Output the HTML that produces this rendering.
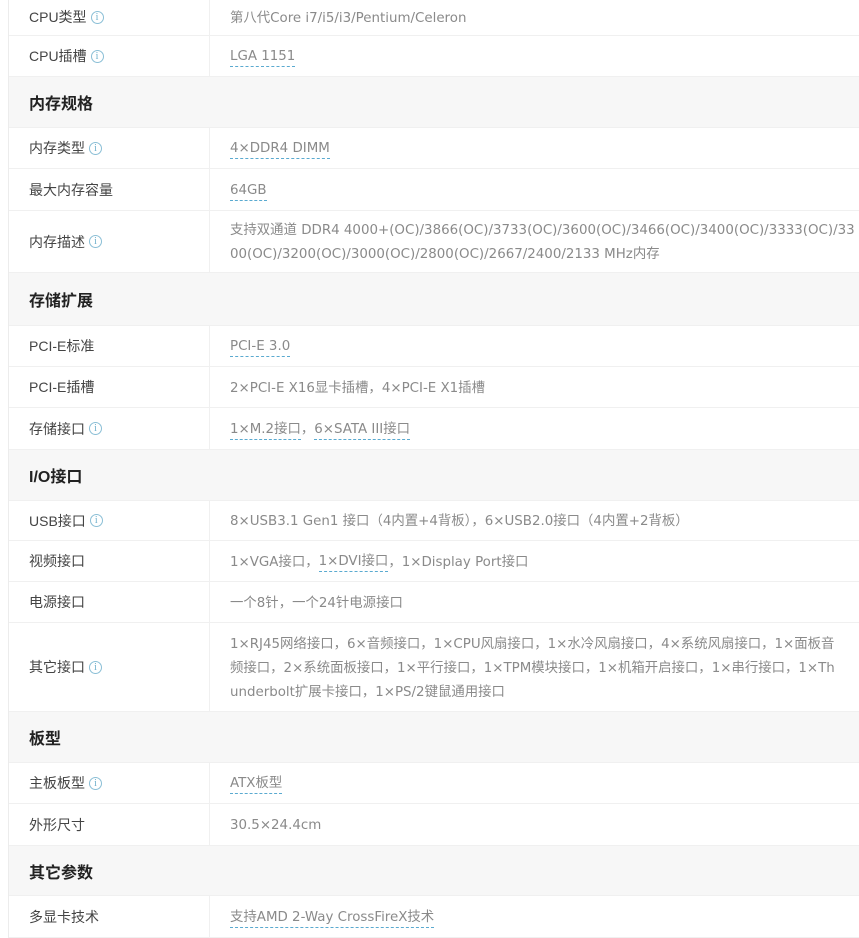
<!DOCTYPE html>
<html><head><meta charset="utf-8"><style>
*{margin:0;padding:0;box-sizing:border-box}
body{width:859px;height:931px;overflow:hidden;background:#fff;font-family:"Liberation Sans","Noto Sans CJK SC",sans-serif;font-size:14px;position:relative}
.wrap{position:absolute;left:8px;top:-1px;width:900px;border-left:1px solid #ececec}
.r{display:flex;border-bottom:1px solid #f0f0f0;background:#fff}
.l{width:201px;flex:none;padding-left:20px;color:#444;display:flex;align-items:center;border-right:1px solid #f0f0f0}
.v{padding-left:20px;padding-top:3px;color:#8a8a8a;display:flex;align-items:center;line-height:24px;white-space:nowrap;font-family:"DejaVu Sans","Noto Sans CJK SC",sans-serif;font-size:13.4px}
.s{background:#f7f7f7;font-weight:bold;font-size:16px;color:#222;padding-left:20px;display:flex;align-items:center;border-bottom:1px solid #f0f0f0}
.u{border-bottom:1px dashed #5aaad0;line-height:18px}
.i{display:inline-block;width:13px;height:13px;border:1px solid #8bbfd6;border-radius:50%;color:#6fb0cc;font-size:10px;line-height:11px;text-align:center;margin-left:4px;font-family:"Liberation Serif",serif}
</style></head><body><div class="wrap">
<div class="r" style="height:37px"><div class="l">CPU类型<span class="i">i</span></div><div class="v">第八代Core i7/i5/i3/Pentium/Celeron</div></div>
<div class="r" style="height:41px"><div class="l">CPU插槽<span class="i">i</span></div><div class="v"><span class="u">LGA 1151</span></div></div>
<div class="s" style="height:51px">内存规格</div>
<div class="r" style="height:41px"><div class="l">内存类型<span class="i">i</span></div><div class="v"><span class="u">4×DDR4 DIMM</span></div></div>
<div class="r" style="height:42px"><div class="l">最大内存容量</div><div class="v"><span class="u">64GB</span></div></div>
<div class="r" style="height:62px"><div class="l">内存描述<span class="i">i</span></div><div class="v">支持双通道 DDR4 4000+(OC)/3866(OC)/3733(OC)/3600(OC)/3466(OC)/3400(OC)/3333(OC)/33<br>00(OC)/3200(OC)/3000(OC)/2800(OC)/2667/2400/2133 MHz内存</div></div>
<div class="s" style="height:53px">存储扩展</div>
<div class="r" style="height:41px"><div class="l">PCI-E标准</div><div class="v"><span class="u">PCI-E 3.0</span></div></div>
<div class="r" style="height:41px"><div class="l">PCI-E插槽</div><div class="v">2×PCI-E X16显卡插槽，4×PCI-E X1插槽</div></div>
<div class="r" style="height:42px"><div class="l">存储接口<span class="i">i</span></div><div class="v"><span class="u">1×M.2接口</span>，<span class="u">6×SATA III接口</span></div></div>
<div class="s" style="height:51px">I/O接口</div>
<div class="r" style="height:40px"><div class="l">USB接口<span class="i">i</span></div><div class="v">8×USB3.1 Gen1 接口（4内置+4背板），6×USB2.0接口（4内置+2背板）</div></div>
<div class="r" style="height:41px"><div class="l">视频接口</div><div class="v">1×VGA接口，<span class="u">1×DVI接口</span>，1×Display Port接口</div></div>
<div class="r" style="height:41px"><div class="l">电源接口</div><div class="v">一个8针，一个24针电源接口</div></div>
<div class="r" style="height:89px"><div class="l">其它接口<span class="i">i</span></div><div class="v">1×RJ45网络接口，6×音频接口，1×CPU风扇接口，1×水冷风扇接口，4×系统风扇接口，1×面板音<br>频接口，2×系统面板接口，1×平行接口，1×TPM模块接口，1×机箱开启接口，1×串行接口，1×Th<br>underbolt扩展卡接口，1×PS/2键鼠通用接口</div></div>
<div class="s" style="height:51px">板型</div>
<div class="r" style="height:41px"><div class="l">主板板型<span class="i">i</span></div><div class="v"><span class="u">ATX板型</span></div></div>
<div class="r" style="height:42px"><div class="l">外形尺寸</div><div class="v">30.5×24.4cm</div></div>
<div class="s" style="height:50px">其它参数</div>
<div class="r" style="height:42px"><div class="l">多显卡技术</div><div class="v"><span class="u">支持AMD 2-Way CrossFireX技术</span></div></div>
</div></body></html>
